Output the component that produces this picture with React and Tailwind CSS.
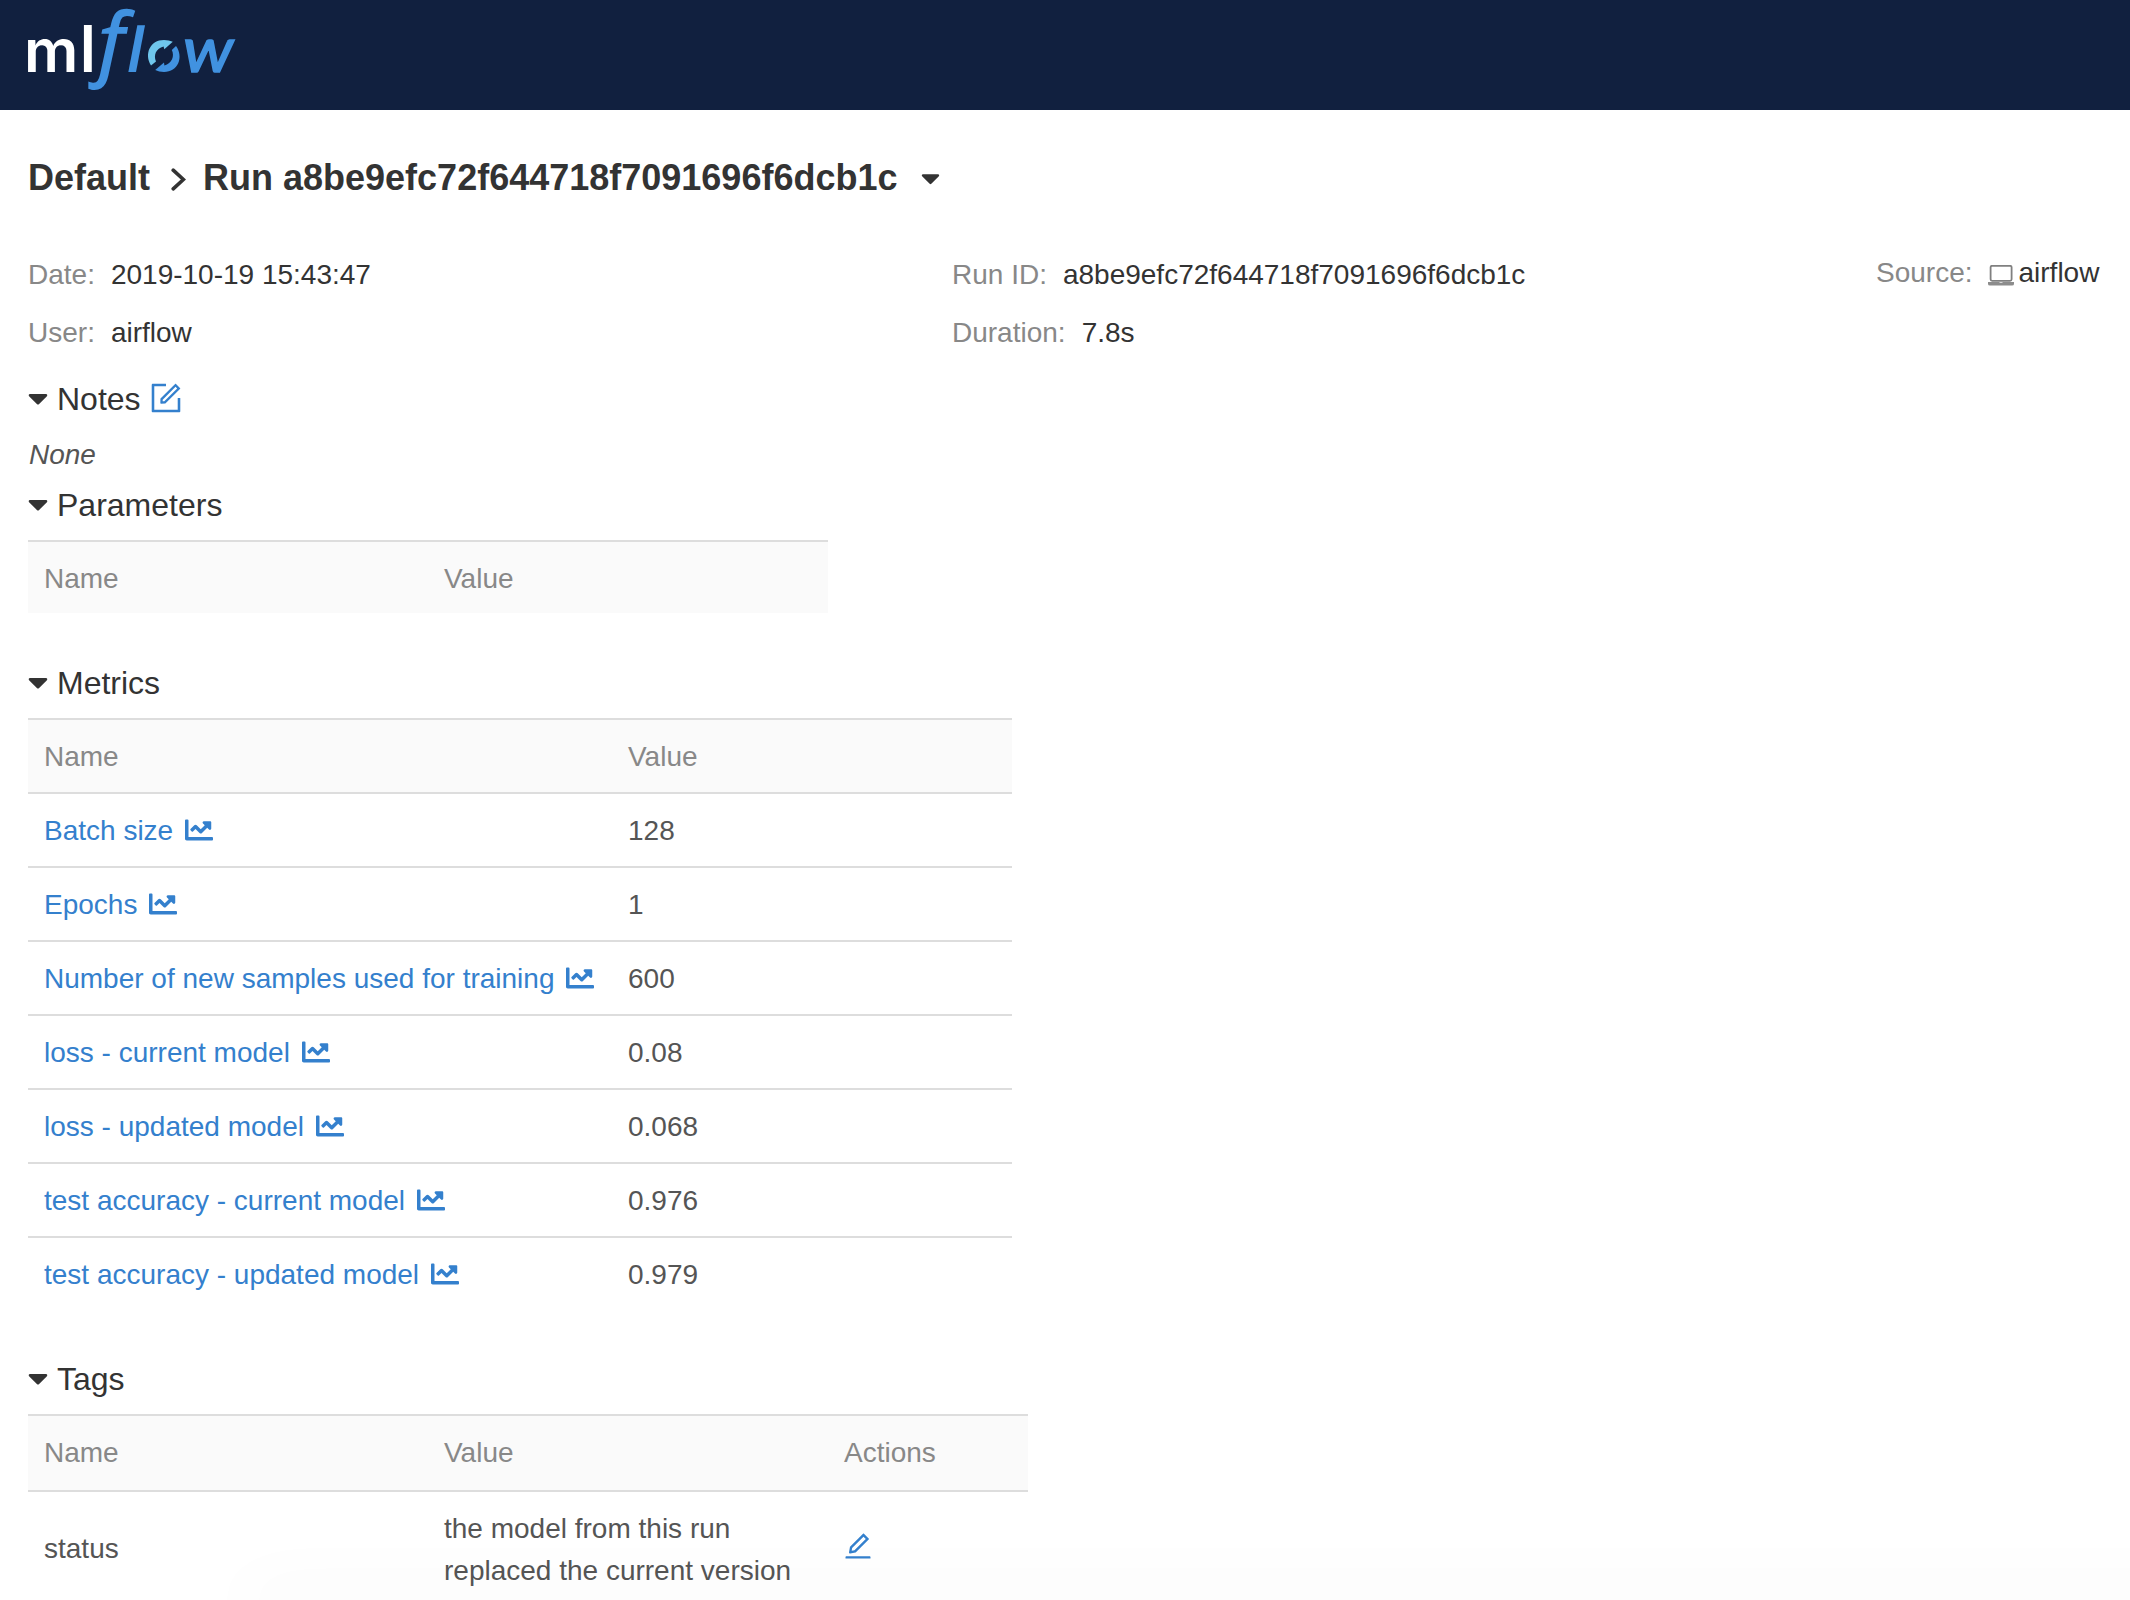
import React from "react";
import { FaCaretDown, FaChartLine } from "react-icons/fa";
import { AiOutlineForm, AiOutlineEdit } from "react-icons/ai";

const metrics = [
  ["Batch size", "128"],
  ["Epochs", "1"],
  ["Number of new samples used for training", "600"],
  ["loss - current model", "0.08"],
  ["loss - updated model", "0.068"],
  ["test accuracy - current model", "0.976"],
  ["test accuracy - updated model", "0.979"],
];

function Logo() {
  return (
    <svg width="260" height="110" viewBox="0 0 260 110" fontFamily="Lato, sans-serif" aria-label="mlflow" className="overflow-visible">
      <text transform="translate(24 72) scale(1.04 1)" fontSize="58" fontWeight="600" fontFamily="Inter, sans-serif" fill="#ffffff">m</text>
      <text x="80" y="72" fontSize="63" fontWeight="700" fill="#ffffff">l</text>
      <g fill="#4192e0" fontStyle="italic" fontWeight="700">
        <text transform="translate(98.5 70.2) scale(1.02 0.98)" fontSize="79.5" fontWeight="400" fontFamily="'Open Sans', sans-serif" stroke="#4192e0" strokeWidth="1.8">f</text>
        <text transform="translate(127 72) skewX(-4)" fontSize="63">l</text>
        <text transform="translate(183 72) scale(1.13 1)" fontSize="62" fontWeight="400" stroke="#4192e0" strokeWidth="1.5">w</text>
      </g>
      <path d="M151 65.5 C144 54 150 40 164 40 Q169 40 172.8 41.8 L164.3 49.3 L163.6 46.5 C156 48.5 153.3 55 156 61.5 Z" fill="#6fc6ec" />
      <path d="M176 46 C184 57 178 72 164 72 Q159 72 155.2 70 L164 62.5 L164.4 65.4 C172 63.5 174.8 56 171.8 50 Z" fill="#4192e0" />
    </svg>
  );
}

function Laptop() {
  return (
    <svg width="26" height="21" viewBox="0 0 26 21" className="-ml-px mr-[5px] mt-1">
      <rect x="2.6" y="0.8" width="21" height="15" rx="1.5" fill="none" stroke="#808080" strokeWidth="1.8" />
      <path d="M0 17h11q0.4 0.8 2 0.8t2-0.8h11v2q0 1.5-2 1.5H2q-2 0-2-1.5z" fill="#8c8c8c" />
    </svg>
  );
}

function Heading({ children, className = "" }) {
  return (
    <h2 className={"flex h-11 items-center text-[32px] leading-[44px] text-[#333] " + className}>
      <FaCaretDown className="-mt-[3px] mr-[9px] h-[32px] w-[20px]" />
      {children}
    </h2>
  );
}

function Info({ label, children }) {
  return (
    <div className="flex h-[58px] items-center leading-[58px]">
      <span className="mr-4 text-[#888]">{label}:</span>
      <span className="flex items-center text-[#333]">{children}</span>
    </div>
  );
}

const headRow = "border-t-2 border-[#ddd] bg-[#fafafa] text-left text-[#888]";

export default function App() {
  return (
    <div className="relative h-[1600px] w-full overflow-hidden bg-white font-['Liberation_Sans',Arial,sans-serif] text-[28px] leading-[42px] text-[#555]">
      <header className="h-[110px] bg-[#11203f]">
        <Logo />
      </header>
      <main className="px-7">
        <h1 className="mt-[43px] flex h-[50px] items-center text-[36px] font-bold leading-[50px] text-[#333]">
          Default
          <svg width="15" height="23" viewBox="0 0 15 23" className="ml-[21px] mr-[17px] mt-0.5">
            <path d="M2.2 2.2 L12.4 11.5 L2.2 20.8" fill="none" stroke="#333" strokeWidth="3.6" strokeLinecap="round" />
          </svg>
          Run a8be9efc72f644718f7091696f6dcb1c
          <FaCaretDown className="-mt-px ml-6 h-[30px] w-[19px]" />
        </h1>
        <section className="mt-[43px] flex">
          <div className="w-[924px]">
            <Info label="Date">2019-10-19 15:43:47</Info>
            <Info label="User">airflow</Info>
          </div>
          <div className="w-[924px]">
            <Info label="Run ID">a8be9efc72f644718f7091696f6dcb1c</Info>
            <Info label="Duration">7.8s</Info>
          </div>
          <div className="-mt-0.5">
            <Info label="Source">
              <Laptop />
              airflow
            </Info>
          </div>
        </section>
        <Heading className="mt-[15px]">
          Notes
          <AiOutlineForm viewBox="64 64 896 896" className="-mt-0.5 ml-[9px] size-8 text-[#3480cd]" />
        </Heading>
        <p className="mt-[13px] pl-px italic">None</p>
        <Heading className="mt-[7px]">Parameters</Heading>
        <table className="mt-[13px] w-[800px] table-fixed border-collapse">
          <thead>
            <tr className={headRow}>
              <th className="h-[72px] px-4 pb-0 pt-0.5 font-normal">Name</th>
              <th className="px-4 pb-0 pt-0.5 font-normal">Value</th>
            </tr>
          </thead>
        </table>
        <Heading className="mt-[48px]">Metrics</Heading>
        <table className="mt-[13px] w-[984px] table-fixed border-collapse">
          <thead>
            <tr className={headRow}>
              <th className="h-[74px] w-[584px] px-4 pb-0 pt-0.5 font-normal">Name</th>
              <th className="px-4 pb-0 pt-0.5 font-normal">Value</th>
            </tr>
          </thead>
          <tbody>
            {metrics.map(([name, value]) => (
              <tr key={name} className="group border-t-2 border-[#ddd]">
                <td className="h-[74px] px-4 pb-0 pt-0.5 group-last:pt-0">
                  <a className="flex items-center whitespace-nowrap text-[#3480cd]">
                    {name}
                    <FaChartLine className="-mt-0.5 ml-3 size-7" />
                  </a>
                </td>
                <td className="px-4 pb-0 pt-0.5 group-last:pt-0">{value}</td>
              </tr>
            ))}
          </tbody>
        </table>
        <Heading className="mt-[46px]">Tags</Heading>
        <table className="mt-[13px] w-[1000px] table-fixed border-collapse">
          <thead>
            <tr className={headRow}>
              <th className="h-[76px] w-[400px] px-4 py-0 font-normal">Name</th>
              <th className="w-[400px] px-4 py-0 font-normal">Value</th>
              <th className="px-4 py-0 font-normal">Actions</th>
            </tr>
          </thead>
          <tbody>
            <tr className="border-t-2 border-[#ddd]">
              <td className="px-4 pb-[18px] pt-4">status</td>
              <td className="px-4 py-4">the model from this run replaced the current version</td>
              <td className="px-4 py-4">
                <AiOutlineEdit viewBox="64 64 896 896" className="-mt-2 size-7 text-[#3480cd]" />
              </td>
            </tr>
          </tbody>
        </table>
      </main>
      <div className="pointer-events-none absolute -right-20 bottom-0 left-[250px] h-px translate-y-full shadow-[0_0_70px_8px_rgba(0,0,0,0.06)]" />
    </div>
  );
}
